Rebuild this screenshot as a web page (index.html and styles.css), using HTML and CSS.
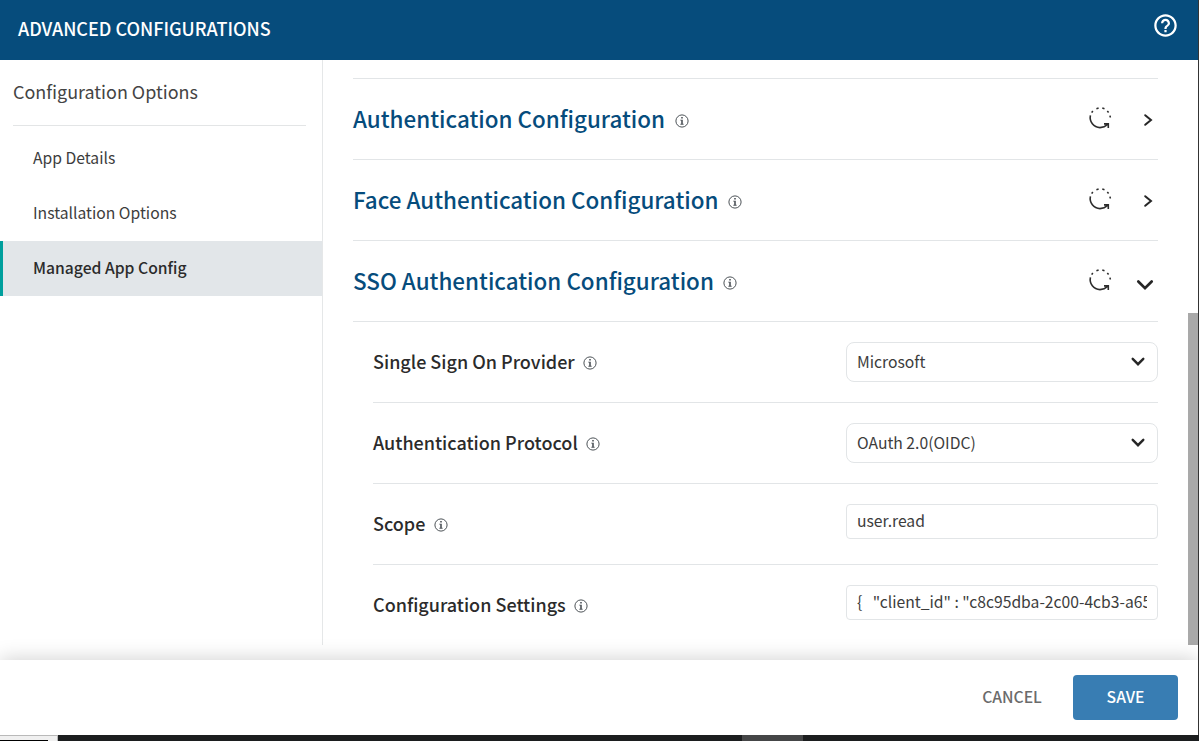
FILE: index.html
```
<!DOCTYPE html>
<html lang="en">
<head>
<meta charset="utf-8">
<title>Advanced Configurations</title>
<link rel="stylesheet" href="styles.css">
</head>
<body>
<svg width="0" height="0" class="symbols">
  <symbol id="info" viewBox="0 0 14 14">
    <circle cx="7" cy="7" r="6.1" fill="none" stroke="currentColor" stroke-width="1"/>
    <path d="M6.2 3.1h1.6v1.5H6.2zM5.2 5.7h2.6v4.1h.8v.9H5.4v-.9h.8V6.6h-1z" fill="currentColor"/>
  </symbol>
  <symbol id="reset" viewBox="0 0 24 24">
    <path d="M2.4 9.4C1.2 15.6 5.6 21.6 12 21.6c3 0 5.6-1.200 7.600-3.300M16 17.900h4.300v4.200" fill="none" stroke="currentColor" stroke-width="1.600"/>
    <path d="M3.700 6.600l1.100-1.600M8.400 2.800l2.200-.7M14.300 2.100l2.200.7M19.300 4.900l1.300 1.500M22 9.600l.3 1.900" fill="none" stroke="currentColor" stroke-width="1.600"/>
  </symbol>
</svg>
<div class="window">
  <div class="dialog">
    <header class="header">
      <h1 class="title">ADVANCED CONFIGURATIONS</h1>
      <svg class="help" viewBox="0 0 24 24"><path fill="currentColor" d="M11 18h2v-2h-2v2zm1-16C6.480 2 2 6.480 2 12s4.480 10 10 10 10-4.480 10-10S17.520 2 12 2zm0 18c-4.410 0-8-3.590-8-8s3.590-8 8-8 8 3.590 8 8-3.590 8-8 8zm0-14c-2.210 0-4 1.790-4 4h2c0-1.100.9-2 2-2s2 .9 2 2c0 2-3 1.750-3 5h2c0-2.250 3-2.500 3-5 0-2.210-1.790-4-4-4z"/></svg>
    </header>
    <div class="body">
      <nav class="sidebar">
        <h2 class="sidebar-title">Configuration Options</h2>
        <a class="nav-item">App Details</a>
        <a class="nav-item">Installation Options</a>
        <a class="nav-item active">Managed App Config</a>
      </nav>
      <main class="content">
        <section class="group">
          <h3 class="group-title">Authentication Configuration</h3>
          <svg class="info"><use href="#info"/></svg>
          <svg class="reset"><use href="#reset"/></svg>
          <svg class="chevron-right" viewBox="0 0 10 14"><path d="M2.200 2.200L8 7 2.200 11.800"/></svg>
        </section>
        <section class="group">
          <h3 class="group-title">Face Authentication Configuration</h3>
          <svg class="info"><use href="#info"/></svg>
          <svg class="reset"><use href="#reset"/></svg>
          <svg class="chevron-right" viewBox="0 0 10 14"><path d="M2.200 2.200L8 7 2.200 11.800"/></svg>
        </section>
        <section class="group">
          <h3 class="group-title">SSO Authentication Configuration</h3>
          <svg class="info"><use href="#info"/></svg>
          <svg class="reset"><use href="#reset"/></svg>
          <svg class="chevron-down" viewBox="0 0 18 12"><path d="M2.300 2.500L9 9.200l6.700-6.700"/></svg>
        </section>
        <div class="fields">
          <div class="field">
            <div class="label"><span>Single Sign On Provider</span><svg class="info"><use href="#info"/></svg></div>
            <div class="select"><span>Microsoft</span><svg class="caret" viewBox="0 0 16 10"><path d="M2.700 1.800L8 7.200l5.300-5.400"/></svg></div>
          </div>
          <div class="field">
            <div class="label"><span>Authentication Protocol</span><svg class="info"><use href="#info"/></svg></div>
            <div class="select"><span>OAuth 2.0(OIDC)</span><svg class="caret" viewBox="0 0 16 10"><path d="M2.700 1.800L8 7.200l5.300-5.400"/></svg></div>
          </div>
          <div class="field">
            <div class="label"><span>Scope</span><svg class="info"><use href="#info"/></svg></div>
            <div class="input"><span>user.read</span></div>
          </div>
          <div class="field">
            <div class="label"><span>Configuration Settings</span><svg class="info"><use href="#info"/></svg></div>
            <div class="input"><span>{   "client_id" : "c8c95dba-2c00-4cb3-a65</span></div>
          </div>
        </div>
      </main>
      <div class="scrollbar"><div class="thumb"></div></div>
    </div>
    <footer class="footer">
      <button class="button cancel">CANCEL</button>
      <button class="button save">SAVE</button>
    </footer>
  </div>
  <div class="taskbar"><div class="task-corner"></div><div class="task-active"></div></div>
</div>
</body>
</html>
```

FILE: styles.css
```
* { box-sizing: border-box; }
body {
  margin: 0;
  overflow: hidden;
  font-family: "Noto Sans CJK SC", "Noto Sans", sans-serif;
  font-size: 15.7px;
  line-height: 24px;
  color: #333;
  background: #fff;
}
h1, h2, h3 { margin: 0; }
svg { display: block; flex: none; }
.symbols { position: absolute; }

.window { display: flex; flex-direction: column; width: 1199px; height: 741px; }
.dialog {
  display: flex;
  flex-direction: column;
  height: 735px;
  border-right: 1px solid #343434;
  overflow: hidden;
}

.header {
  display: flex;
  justify-content: space-between;
  height: 60px;
  flex: none;
  padding: 12px 19px 0 18px;
  background: #064c7c;
  color: #fff;
}
.title { margin-top: 4px; font-size: 17.55px; font-weight: 700; line-height: 24px; }
.title { font-size: 18px; font-weight: 500; }
.help { width: 27px; height: 27px; }

.body { display: flex; height: 600px; flex: none; }
.sidebar { width: 323px; height: 585px; border-right: 1px solid #e5e7e8; }
.sidebar-title {
  height: 66px;
  margin: 0 16px 5px 13px;
  padding-top: 19px;
  border-bottom: 1px solid #e3e5e6;
  font-size: 17.95px;
  font-weight: 400;
  color: #444;
}
.nav-item {
  display: flex;
  align-items: center;
  height: 55px;
  padding: 0 0 2px 33px;
  color: #3c3c3c;
}
.nav-item.active {
  padding-left: 30px;
  border-left: 3px solid #009f9d;
  background: #e2e6e9;
  font-weight: 500;
  color: #2b2b2b;
}

.content { width: 805px; margin-left: 30px; padding-top: 18px; border-top: 0; }
.group {
  display: flex;
  align-items: center;
  height: 81px;
  border-top: 1px solid #e2e5e7;
}
.group-title {
  padding-bottom: 2px;
  font-size: 22.43px;
  font-weight: 500;
  line-height: 30px;
  color: #064c7c;
}
.info { width: 14px; height: 14px; color: #4c5257; }
.group .info { margin: 4px 0 0 9.500px; }
.reset { width: 24px; height: 24px; margin: 0 31px 2px auto; color: #2d2d2d; }
.chevron-right, .chevron-down, .caret {
  fill: none;
  stroke: #262626;
  stroke-width: 2;
  stroke-linecap: round;
}
.chevron-right { width: 10px; height: 14px; margin: 1px 5px 0 0; }
.chevron-down { width: 18px; height: 12px; margin: 8px 4px 0 -7px; stroke-width: 2.700; }

.fields { border-top: 1px solid #e2e5e7; padding-left: 20px; }
.field {
  display: flex;
  justify-content: space-between;
  height: 81px;
  border-bottom: 1px solid #e2e5e7;
}
.field:last-child { border-bottom: 0; }
.label {
  display: flex;
  align-items: center;
  height: 78px;
  font-size: 18px;
  font-weight: 500;
  color: #2b2b2b;
}
.label .info { margin: 4px 0 0 8.500px; }
.select, .input {
  display: flex;
  align-items: center;
  width: 312px;
  margin-top: 20px;
  padding: 0 10px;
  border: 1px solid #e2e5e7;
  white-space: pre;
  color: #3c3c3c;
}
.select { justify-content: space-between; height: 40px; border-radius: 8px; }
.caret { width: 16px; height: 10px; margin: 0 1px 1px 0; stroke-width: 2.400; }
.input { height: 35px; padding-bottom: 2px; border-radius: 4px; }
.input span { overflow: hidden; }

.scrollbar { width: 10px; margin-left: auto; padding-top: 253px; }
.thumb { height: 332px; background: #a9a9a9; }

.footer {
  position: relative;
  display: flex;
  justify-content: flex-end;
  height: 75px;
  flex: none;
  padding: 15px 20px 15px 0;
  background: #fff;
  box-shadow: 0 0 20px rgba(0, 0, 0, .2);
}
.button {
  height: 45px;
  border: 0;
  border-radius: 4px;
  padding: 0 0 2px;
  background: none;
  font: 500 15.7px/24px "Noto Sans CJK SC", "Noto Sans", sans-serif;
  color: #6b6b6b;
}
.cancel { width: 60px; margin-right: 31px; }
.save { width: 105px; background: #387db3; color: #fff; }

.taskbar { display: flex; height: 6px; background: #1c1e1f; }
.task-corner {
  width: 58px;
  border-top: 1px solid #b9b9b9;
  border-right: 1px solid #b9b9b9;
  background: linear-gradient(#000, #000) 0 100% / 48px 1px no-repeat #f0f0f0;
}
.task-active { width: 61px; margin-left: 684px; background: #454647; }
```
